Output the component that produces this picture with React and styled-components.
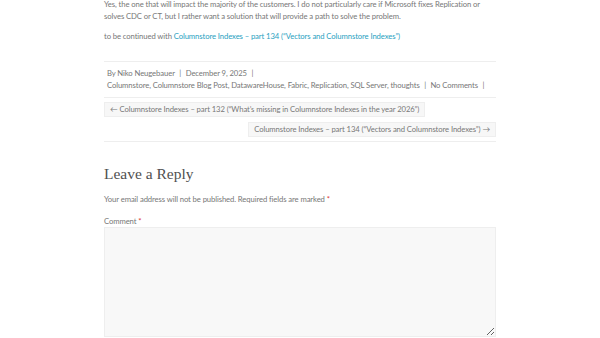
import React from 'react';
import styled, {createGlobalStyle} from 'styled-components';

const GlobalStyle = createGlobalStyle`
    html, body {
        margin: 0;
        padding: 0;
        background: #fff;
    }
    body {
        font-family: Lato, "Liberation Sans", sans-serif;
        color: #777;
        overflow: hidden;
    }
`;

const Page = styled.div`
    width: 392px;
    margin: -2px 0 0 104px;
    font-size: 7.7px;
    letter-spacing: -0.1px;
    line-height: 12px;
`;

const Para = styled.p`
    margin: 0 0 ${props => props.gap || 8}px;
`;

const Link = styled.a`
    color: #2a9fbf;
    text-decoration: none;
`;

const Rule = styled.div`
    height: 1px;
    background: #eee;
`;

const Meta = styled.div`
    padding: 5px 0 6px 3px;
    line-height: 12px;
    white-space: nowrap;
`;

const Sep = styled.span`
    margin: 0 4.5px;
`;

const Nav = styled.div`
    display: flex;
    flex-direction: column;
    gap: 5px;
    padding: 4px 0 4px;
`;

const NavButton = styled.a`
    align-self: ${props => props.next ? 'flex-end' : 'flex-start'};
    display: block;
    padding: 1px 5px;
    line-height: 11px;
    background: #f7f7f7;
    border: 1px solid #eee;
    color: #777;
    text-decoration: none;
`;

const Reply = styled.section`
    padding-top: 22px;
`;

const Title = styled.h3`
    margin: 0 0 9px;
    font-family: "Liberation Serif", serif;
    font-weight: 400;
    font-size: 15.5px;
    letter-spacing: 0;
    line-height: 20px;
    color: #505050;
`;

const Req = styled.span`
    color: #d33;
`;

const Label = styled.label`
    display: block;
    margin-bottom: 0;
`;

const TextArea = styled.textarea`
    display: block;
    box-sizing: border-box;
    width: 392px;
    height: 110px;
    margin: 0;
    background: #f8f8f8;
    border: 1px solid #eee;
    font: inherit;
`;

export default function App() {
    return (
        <>
            <GlobalStyle/>
            <Page>
                <Para gap={8}>
                    Yes, the one that will impact the majority of the customers. I do not particularly care if Microsoft fixes Replication or solves CDC or CT, but I rather want a solution that will provide a path to solve the problem.
                </Para>
                <Para gap={19}>
                    to be continued with <Link href="#">Columnstore Indexes – part 134 (“Vectors and Columnstore Indexes”)</Link>
                </Para>
                <Rule/>
                <Meta>
                    By Niko Neugebauer<Sep>|</Sep>December 9, 2025<Sep>|</Sep><br/>
                    Columnstore, Columnstore Blog Post, DatawareHouse, Fabric, Replication, SQL Server, thoughts<Sep>|</Sep>No Comments<Sep>|</Sep>
                </Meta>
                <Rule/>
                <Nav>
                    <NavButton href="#">← Columnstore Indexes – part 132 (“What’s missing in Columnstore Indexes in the year 2026”)</NavButton>
                    <NavButton href="#" next>Columnstore Indexes – part 134 (“Vectors and Columnstore Indexes”) →</NavButton>
                </Nav>
                <Rule/>
                <Reply>
                    <Title>Leave a Reply</Title>
                    <Para gap={10}>Your email address will not be published. Required fields are marked <Req>*</Req></Para>
                    <Label>Comment <Req>*</Req></Label>
                    <TextArea/>
                </Reply>
            </Page>
        </>
    );
}
